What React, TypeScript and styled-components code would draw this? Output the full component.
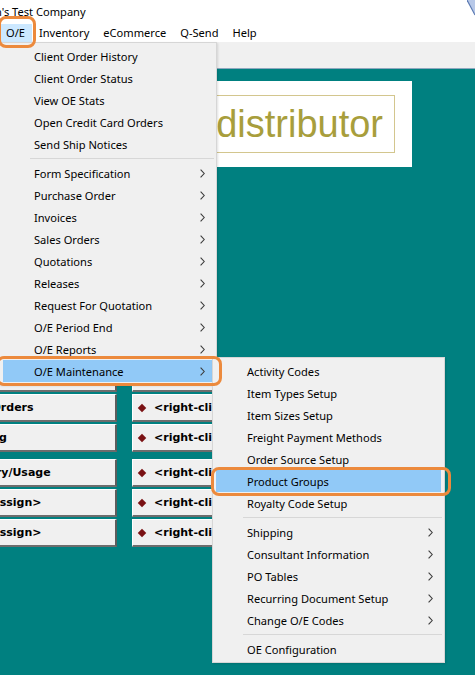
import styled, { createGlobalStyle } from "styled-components"

const GlobalStyle = createGlobalStyle`
    html, body {
        margin: 0;
        padding: 0;
        background: #ffffff;
    }
    * {
        box-sizing: border-box;
    }
`

const uiFont = `"Noto Sans", "Open Sans", "DejaVu Sans", sans-serif`
const buttonFont = `"DejaVu Sans", Verdana, sans-serif`

const topMenu = ["O/E", "Inventory", "eCommerce", "Q-Send", "Help"]

type Entry = { label: string; sub?: boolean; active?: boolean } | "sep"

const oeMenu: Entry[] = [
    { label: "Client Order History" },
    { label: "Client Order Status" },
    { label: "View OE Stats" },
    { label: "Open Credit Card Orders" },
    { label: "Send Ship Notices" },
    "sep",
    { label: "Form Specification", sub: true },
    { label: "Purchase Order", sub: true },
    { label: "Invoices", sub: true },
    { label: "Sales Orders", sub: true },
    { label: "Quotations", sub: true },
    { label: "Releases", sub: true },
    { label: "Request For Quotation", sub: true },
    { label: "O/E Period End", sub: true },
    { label: "O/E Reports", sub: true },
    { label: "O/E Maintenance", sub: true, active: true },
]

const maintenanceMenu: Entry[] = [
    { label: "Activity Codes" },
    { label: "Item Types Setup" },
    { label: "Item Sizes Setup" },
    { label: "Freight Payment Methods" },
    { label: "Order Source Setup" },
    { label: "Product Groups", active: true },
    { label: "Royalty Code Setup" },
    "sep",
    { label: "Shipping", sub: true },
    { label: "Consultant Information", sub: true },
    { label: "PO Tables", sub: true },
    { label: "Recurring Document Setup", sub: true },
    { label: "Change O/E Codes", sub: true },
    "sep",
    { label: "OE Configuration" },
]

const assign = "<right-click to assign>"

const buttonGroups: string[][] = [
    ["Client Maintenance", "Item Maintenance", "Vendor Maintenance"],
    ["Order Entry", "Order Inquiry", "Invoice Entry"],
    ["Client Order Inquiry", "Pending Sales Orders", "Order Processing"],
    ["Customer History/Usage", assign, assign],
]

export default function App() {
    return (
        <>
            <GlobalStyle />
            <Screen>
                <TitleBar>
                    <TitleText>n's Test Company</TitleText>
                    <CornerMark width="8" height="16" viewBox="0 0 8 16">
                        <polygon points="0,0 8,0 8,15" fill="#b7c8e8" />
                        <line x1="0" y1="0" x2="8" y2="15" stroke="#5d7bb3" strokeWidth="1.2" />
                    </CornerMark>
                </TitleBar>
                <MenuBar>
                    {topMenu.map((m, i) => (
                        <MenuBarItem key={m} $open={i === 0}>{m}</MenuBarItem>
                    ))}
                </MenuBar>
                <ToolStrip />
                <Desktop>
                    <LogoRow>
                        <LogoPanel>
                            <LogoFrame>
                                <LogoText>distributor</LogoText>
                            </LogoFrame>
                        </LogoPanel>
                    </LogoRow>
                    <ButtonArea>
                        {buttonGroups.map((group, g) => (
                            <ButtonGroup key={g}>
                                {group.map((label, r) => (
                                    <Row key={r}>
                                        <DeskButton>
                                            <Diamond />
                                            <ButtonLabel>{label}</ButtonLabel>
                                        </DeskButton>
                                        <DeskButton>
                                            <Diamond />
                                            <ButtonLabel>{assign}</ButtonLabel>
                                        </DeskButton>
                                    </Row>
                                ))}
                            </ButtonGroup>
                        ))}
                    </ButtonArea>
                </Desktop>

                <DropMenu $left={-1} $top={42} $width={218}>
                    <MenuEntries entries={oeMenu} />
                </DropMenu>
                <DropMenu $left={212} $top={357} $width={233}>
                    <MenuEntries entries={maintenanceMenu} />
                </DropMenu>

                <Callout $x={-2} $y={16} $w={38} $h={32} />
                <Callout $x={-4} $y={356} $w={226} $h={30} />
                <Callout $x={211} $y={467} $w={240} $h={29} />
            </Screen>
        </>
    )
}

const MenuEntries = ({ entries }: { entries: Entry[] }) => (
    <>
        {entries.map((e, i) =>
            e === "sep" ? (
                <Separator key={i} />
            ) : (
                <MenuItem key={i} $active={!!e.active}>
                    <span>{e.label}</span>
                    {e.sub && (
                        <Chevron width="5" height="9" viewBox="0 0 5 9">
                            <path d="M0.6 0.6 L4.2 4.5 L0.6 8.4" fill="none" stroke="#3c3c3c" strokeWidth="1.1" />
                        </Chevron>
                    )}
                </MenuItem>
            )
        )}
    </>
)

const Screen = styled.div`
    position: relative;
    width: 475px;
    height: 675px;
    overflow: hidden;
    display: flex;
    flex-direction: column;
    background: #ffffff;
    font-family: ${uiFont};
    font-size: 11.1px;
    color: #000;
`
const TitleBar = styled.div`
    height: 22px;
    flex-shrink: 0;
    display: flex;
    align-items: center;
    justify-content: space-between;
    background: #ffffff;
    overflow: hidden;
`
const TitleText = styled.span`
    margin-left: -5px;
    margin-top: 1px;
    white-space: nowrap;
`
const CornerMark = styled.svg`
    position: absolute;
    top: 0;
    right: 0;
`
const MenuBar = styled.div`
    height: 20px;
    flex-shrink: 0;
    display: flex;
    padding-top: 2px;
    margin-left: -1px;
    background: #ffffff;
`
const MenuBarItem = styled.div<{ $open: boolean }>`
    height: 18px;
    line-height: 18px;
    padding: 0 7px;
    white-space: nowrap;
    background: ${p => (p.$open ? "#cce8ff" : "transparent")};
`
const ToolStrip = styled.div`
    height: 27px;
    flex-shrink: 0;
    background: #f0f0f0;
    border-bottom: 1px solid #8ea8bf;
`
const Desktop = styled.div`
    flex: 1;
    background: #008080;
    display: flex;
    flex-direction: column;
`
const LogoRow = styled.div`
    display: flex;
    justify-content: flex-end;
    padding: 12px 63px 0 0;
`
const LogoPanel = styled.div`
    height: 86px;
    padding: 14px 17px 14px 60px;
    background: #ffffff;
`
const LogoFrame = styled.div`
    height: 58px;
    display: flex;
    align-items: center;
    padding: 0 11px 0 30px;
    border: 1px solid #d3c68e;
`
const LogoText = styled.span`
    font-family: "Liberation Sans", Arial, sans-serif;
    font-size: 38px;
    line-height: 1;
    color: #a89e3c;
    white-space: nowrap;
`
const ButtonArea = styled.div`
    margin: 7px 0 0 -122px;
    display: flex;
    flex-direction: column;
    gap: 7px;
`
const ButtonGroup = styled.div`
    display: flex;
    flex-direction: column;
    gap: 2px;
`
const Row = styled.div`
    display: grid;
    grid-template-columns: 239px 84px;
    column-gap: 15px;
`
const DeskButton = styled.div`
    height: 28px;
    display: flex;
    align-items: center;
    gap: 8px;
    padding-left: 5px;
    overflow: hidden;
    background: #f0f0f0;
    border-top: 1px solid #ffffff;
    border-left: 1px solid #ffffff;
    border-bottom: 2px solid #6d6d6d;
    border-right: 2px solid #5c5c5c;
`
const Diamond = styled.span`
    width: 6px;
    height: 6px;
    margin: 0 1px;
    flex-shrink: 0;
    background: #7a1214;
    transform: rotate(45deg);
`
const ButtonLabel = styled.span`
    font-family: ${buttonFont};
    font-weight: bold;
    font-size: 11px;
    white-space: nowrap;
`
const DropMenu = styled.div<{ $left: number; $top: number; $width: number }>`
    position: absolute;
    left: ${p => p.$left}px;
    top: ${p => p.$top}px;
    width: ${p => p.$width}px;
    padding: 2px 0;
    background: #f0f0f0;
    border: 1px solid #d6d6d6;
    box-shadow: 1px 1px 2px rgba(0, 0, 0, 0.12);
`
const MenuItem = styled.div<{ $active: boolean }>`
    height: 22px;
    margin: 0 3px;
    padding: 0 8px 0 31px;
    display: flex;
    align-items: center;
    justify-content: space-between;
    white-space: nowrap;
    background: ${p => (p.$active ? "#91c9f7" : "transparent")};
`
const Chevron = styled.svg`
    flex-shrink: 0;
`
const Separator = styled.div`
    height: 1px;
    margin: 3px 2px 3px 30px;
    background: #d7d7d7;
`
const Callout = styled.div<{ $x: number; $y: number; $w: number; $h: number }>`
    position: absolute;
    left: ${p => p.$x}px;
    top: ${p => p.$y}px;
    width: ${p => p.$w}px;
    height: ${p => p.$h}px;
    border: 3px solid #ec8a3d;
    border-radius: 8px;
    pointer-events: none;
`
